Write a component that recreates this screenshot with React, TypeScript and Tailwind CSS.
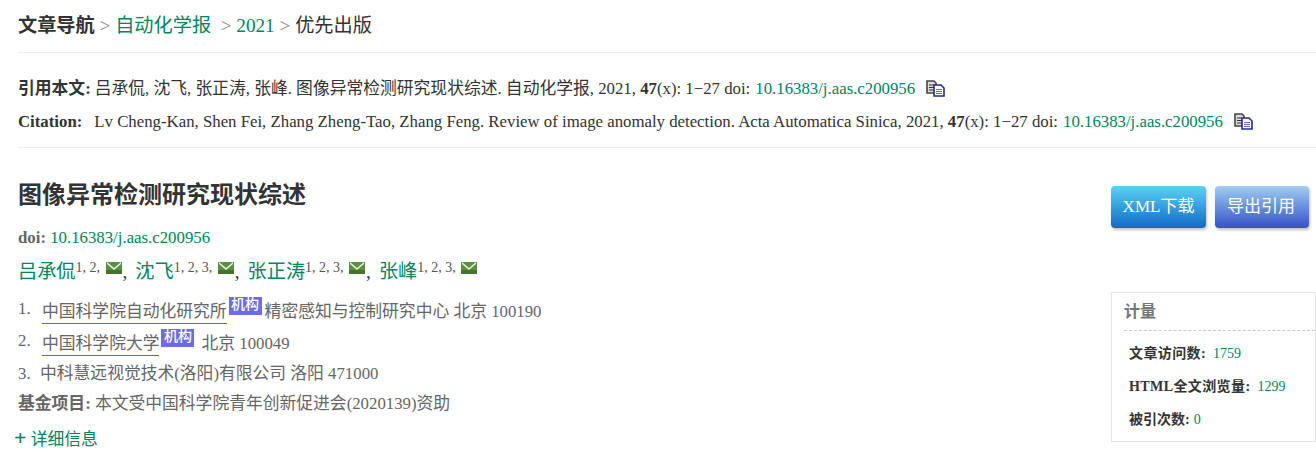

const GREEN = "text-[#008561]";

function Mail() {
  return (
    <svg width="16" height="12" viewBox="0 0 16 12" className="inline-block ml-[2px] mr-[1px] align-[4px]">
      <rect width="16" height="12" fill="#5a8f45" />
      <rect y="8" width="16" height="4" fill="#44752f" />
      <path d="M1 0 L8 6 L15 0 L15 2 L8 8 L1 2 Z" fill="#e6f0e0" />
    </svg>
  );
}

function Copy() {
  return (
    <svg width="19" height="17" viewBox="0 0 19 17" className="inline-block">
      <path d="M1 1H8L10 3V13H1Z" fill="#ddd" stroke="#444" strokeWidth="1.6" />
      <path d="M3 5H8M3 7.5H8M3 10H8" stroke="#333" strokeWidth="1.2" />
      <path d="M8 5H15L18 8V16H8Z" fill="#fff" stroke="#2a2a96" strokeWidth="1.6" />
      <path d="M10 9.5H16M10 11.5H16M10 13.5H16" stroke="#6a6ac0" strokeWidth="1.1" />
    </svg>
  );
}

function Author({ name, sup, comma = true }: { name: string; sup: string; comma?: boolean }) {
  return (
    <span>
      <span className={`text-[19.2px] ${GREEN}`}>{name}</span>
      <span className="text-[14px] text-[#555] align-[6px] whitespace-pre">{sup}</span>
      <Mail />
      {comma && <span className="text-[19.2px] text-[#333] mr-[8px]">,</span>}
    </span>
  );
}

function Badge() {
  return (
    <span className="self-start mt-[1px] inline-block bg-[#6c6ce6] text-white font-medium text-[14px] leading-[16px] h-[18px] px-[2.5px] ml-[2px]">
      机构
    </span>
  );
}

function Underlined({ text }: { text: string }) {
  return (
    <span className="flex flex-col">
      <span className="h-[27px] leading-[31px]">{text}</span>
      <span className="h-px bg-[#5c5ce8]" />
    </span>
  );
}

export default function App() {
  return (
    <div
      className="w-[1316px] h-[452px] overflow-hidden bg-white pl-[18px] text-[#333]"
      style={{ fontFamily: '"Liberation Serif", "Noto Sans CJK SC", serif' }}
    >
      <div className="h-[53px] border-b border-[#eeeeee] pt-[12px] text-[19.2px] leading-[27px] whitespace-nowrap">
        <span className="font-bold text-[#333]">文章导航</span>
        <span className="text-[#888]"> &gt; </span>
        <span className={GREEN}>自动化学报</span>
        <span className="text-[#888]"> &nbsp;&gt; </span>
        <span className={GREEN}>2021</span>
        <span className="text-[#888]"> &gt; </span>
        <span>优先出版</span>
      </div>

      <div className="h-[95px] border-b border-[#eeeeee] pt-[19px] text-[16.8px] whitespace-nowrap text-[#333]">
        <div className="h-[33px] leading-[33px] flex items-center">
          <b>引用本文:</b>
          <span className="ml-[4px]">吕承侃, 沈飞, 张正涛, 张峰. 图像异常检测研究现状综述. 自动化学报, 2021, <b>47</b>(x): 1−27 doi: </span>
          <span className={`ml-[5px] ${GREEN}`}>10.16383/j.aas.c200956</span>
          <span className="ml-[11px] flex"><Copy /></span>
        </div>
        <div className="h-[33px] leading-[33px] flex items-center">
          <b>Citation:</b>
          <span className="ml-[12px]">Lv Cheng-Kan, Shen Fei, Zhang Zheng-Tao, Zhang Feng. Review of image anomaly detection. Acta Automatica Sinica, 2021, <b>47</b>(x): 1−27 doi: </span>
          <span className={`ml-[5px] ${GREEN}`}>10.16383/j.aas.c200956</span>
          <span className="ml-[11px] flex"><Copy /></span>
        </div>
      </div>

      <div className="flex justify-between">
        <div className="whitespace-nowrap">
          <h1 className="mt-[30px] text-[24px] leading-[34px] font-bold text-[#333]">图像异常检测研究现状综述</h1>
          <div className="mt-[15px] text-[16.8px] leading-[22px] text-[#666]">
            <b>doi:</b> <span className={GREEN}>10.16383/j.aas.c200956</span>
          </div>
          <div className="mt-[3px] h-[32px] leading-[32px]">
            <Author name="吕承侃" sup="1, 2, " />
            <Author name="沈飞" sup="1, 2, 3, " />
            <Author name="张正涛" sup="1, 2, 3, " />
            <Author name="张峰" sup="1, 2, 3, " comma={false} />
          </div>
          <div className="mt-[12px] text-[16.8px] text-[#666]">
            <div className="h-[32px] flex items-start">
              <span className="w-[24px] leading-[26px]">1.</span>
              <Underlined text="中国科学院自动化研究所" />
              <Badge />
              <span className="ml-[3px] leading-[32px]">精密感知与控制研究中心 北京 100190</span>
            </div>
            <div className="h-[31px] flex items-start">
              <span className="w-[24px] leading-[26px]">2.</span>
              <Underlined text="中国科学院大学" />
              <Badge />
              <span className="ml-[7px] leading-[32px]">北京 100049</span>
            </div>
            <div className="h-[30px] leading-[30px]">
              <span className="inline-block w-[22px]">3.</span>中科慧远视觉技术(洛阳)有限公司 洛阳 471000
            </div>
            <div className="h-[30px] leading-[30px]">
              <b>基金项目:</b> 本文受中国科学院青年创新促进会(2020139)资助
            </div>
          </div>
          <div className={`mt-[9px] -ml-[4px] text-[16.8px] leading-[24px] ${GREEN}`}>
            <span className="text-[22px] leading-[20px] font-bold">+</span> 详细信息
          </div>
        </div>

        <div className="w-[205px] shrink-0">
          <div className="mt-[38px] flex gap-[9px]">
            <div className="w-[95px] h-[42px] rounded-[4px] bg-gradient-to-b from-[#5bd3f2] to-[#1569c7] text-white text-[17px] leading-[42px] text-center shadow-[1px_2px_3px_rgba(0,0,0,0.25)]">
              XML下载
            </div>
            <div className="w-[94px] h-[42px] pr-[2px] rounded-[4px] bg-gradient-to-b from-[#a3cdf0] to-[#3a4fc4] text-white text-[17px] leading-[42px] text-center shadow-[1px_2px_3px_rgba(0,0,0,0.25)]">
              导出引用
            </div>
          </div>
          <div className="mt-[64px] h-[150px] border border-[#e5e5e5] pl-[12px]">
            <div className="h-[38px] leading-[37px] border-b border-dashed border-[#cccccc] text-[16px] font-bold text-[#777]">计量</div>
            <div className="text-[14px] pl-[5px] pt-[6px] text-[#333]">
              <div className="h-[33px] leading-[33px]"><b className="tracking-[0.4px]">文章访问数:</b><span className={`ml-[7px] ${GREEN}`}>1759</span></div>
              <div className="h-[33px] leading-[33px]"><b className="tracking-[0.4px]">HTML全文浏览量:</b><span className={`ml-[7px] ${GREEN}`}>1299</span></div>
              <div className="h-[33px] leading-[33px]"><b>被引次数:</b><span className={`ml-[4px] ${GREEN}`}>0</span></div>
            </div>
          </div>
        </div>
      </div>
    </div>
  );
}
